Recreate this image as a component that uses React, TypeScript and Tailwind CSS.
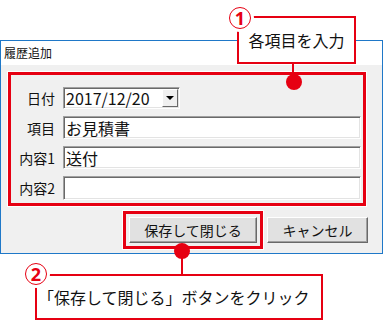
import React from 'react';

const RED = 'border-[#e60012]';

function Sunken({ className = '', children }: { className?: string; children?: React.ReactNode }) {
  return (
    <div
      className={`bg-white border border-t-[#a0a0a0] border-l-[#a0a0a0] border-b-white border-r-white shadow-[inset_1px_1px_0_#696969,inset_-1px_-1px_0_#e3e3e3] flex items-center ${className}`}
    >
      {children}
    </div>
  );
}

function Field({ label, children }: { label: string; children: React.ReactNode }) {
  return (
    <div className="flex items-center h-[23px] gap-[8px]">
      <div className="w-[44px] text-right text-[14px] leading-none">{label}</div>
      {children}
    </div>
  );
}

function Circled({ n, className }: { n: string; className: string }) {
  return (
    <div
      className={`absolute w-[22px] h-[22px] rounded-full border-[1.5px] ${RED} bg-white ring-[3px] ring-white flex items-center justify-center text-[#e60012] font-['Noto_Sans',sans-serif] font-bold text-[18px] leading-none ${className}`}
    >
      {n}
    </div>
  );
}

export default function App() {
  return (
    <div className="relative w-[386px] h-[323px] bg-white overflow-hidden text-[#111] font-['Noto_Sans_CJK_JP','Noto_Sans',sans-serif]">
      {/* window */}
      <div className="mt-[40px] w-[383px] h-[214px] border border-[#1f78c8] flex flex-col">
        <div className="h-[24px] bg-white pl-[3px] text-[12px] flex items-center">履歴追加</div>

        <div className="flex-1 bg-[#f0f0f0] pl-[7px] pt-[7px]">
          <div className={`w-[358px] h-[134px] border-[3px] ${RED} ring-1 ring-white pt-[11px] flex flex-col gap-[7px]`}>
            <Field label="日付">
              <Sunken className="w-[117px] h-[22px] justify-between">
                <span className="pl-[2px] text-[16px] leading-none">2017/12/20</span>
                <div className="w-[16px] h-[18px] mr-[1px] bg-[#f0f0f0] border border-t-white border-l-white border-b-[#696969] border-r-[#696969] flex items-center justify-center">
                  <div className="w-0 h-0 border-l-[4px] border-r-[4px] border-t-[4px] border-l-transparent border-r-transparent border-t-black" />
                </div>
              </Sunken>
            </Field>
            <Field label="項目">
              <Sunken className="w-[298px] h-[23px]">
                <span className="pl-[2px] text-[16px] leading-none">お見積書</span>
              </Sunken>
            </Field>
            <Field label="内容1">
              <Sunken className="w-[298px] h-[23px]">
                <span className="pl-[2px] text-[16px] leading-none">送付</span>
              </Sunken>
            </Field>
            <Field label="内容2">
              <Sunken className="w-[298px] h-[24px]" />
            </Field>
          </div>

          <div className="mt-[5px] flex justify-end items-center gap-[4px] pr-[14px]">
            <div className={`border-[3px] ${RED} ring-1 ring-white p-[3px]`}>
              <button className="w-[128px] h-[26px] bg-[#e1e1e1] border border-t-white border-l-white border-b-[#696969] border-r-[#696969] shadow-[inset_-1px_-1px_0_#a0a0a0] text-[14px] leading-none">
                保存して閉じる
              </button>
            </div>
            <button className="w-[101px] h-[26px] bg-[#e1e1e1] border border-t-white border-l-white border-b-[#696969] border-r-[#696969] shadow-[inset_-1px_-1px_0_#a0a0a0] text-[14px] leading-none">
              キャンセル
            </button>
          </div>
        </div>
      </div>

      {/* callout 1 */}
      <div className={`absolute left-[237px] top-[16px] w-[119px] h-[48px] border-2 ${RED} bg-white flex items-center justify-center text-[16px] leading-none`}>
        各項目を入力
      </div>
      <Circled n="1" className="left-[229px] top-[7px]" />
      <div className="absolute left-[292px] top-[64px] w-[2px] h-[14px] bg-[#e60012]" />
      <div className="absolute left-[286px] top-[74px] w-[16px] h-[16px] rounded-full bg-[#e60012]" />

      {/* callout 2 */}
      <div className={`absolute left-[35px] top-[274px] w-[288px] h-[46px] border-2 ${RED} bg-white flex items-center pl-[1px] text-[16px] leading-none`}>
        「保存して閉じる」ボタンをクリック
      </div>
      <Circled n="2" className="left-[25px] top-[263px]" />
      <div className="absolute left-[181px] top-[256px] w-[2px] h-[18px] bg-[#e60012]" />
      <div className="absolute left-[174px] top-[243px] w-[16px] h-[16px] rounded-full bg-[#e60012]" />
    </div>
  );
}
